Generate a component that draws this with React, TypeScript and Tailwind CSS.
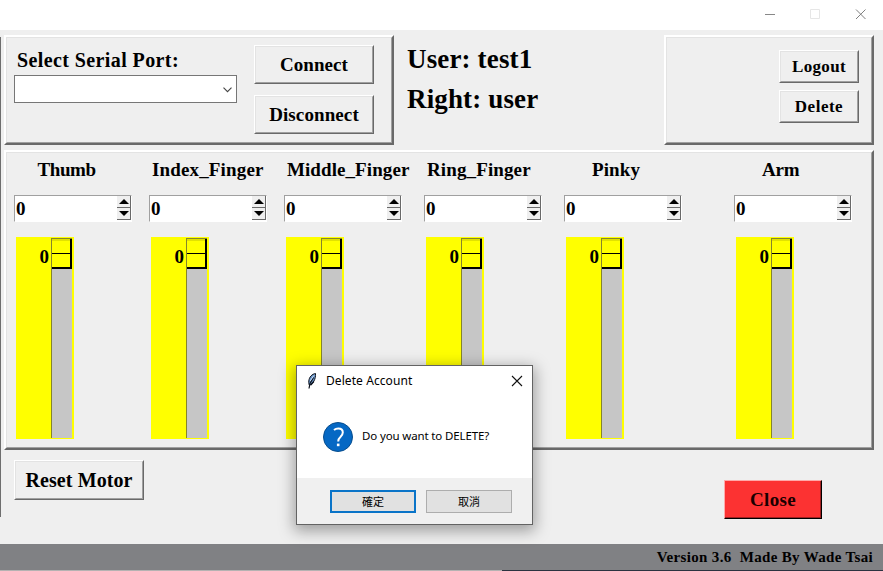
import React from "react";

const serif = "font-['Liberation_Serif',serif] font-bold text-black whitespace-nowrap leading-none";
const dialogFont = "font-['Noto_Sans','Noto_Sans_CJK_TC',sans-serif] text-black whitespace-nowrap leading-none";

function Raised({ className, children }: { className: string; children?: React.ReactNode }) {
  return (
    <div className={`shrink-0 border-2 border-t-white border-l-white border-r-[#696969] border-b-[#696969] ${className}`}>
      <div className="h-full w-full border border-t-[#e3e3e3] border-l-[#e3e3e3] border-r-[#a0a0a0] border-b-[#a0a0a0]">
        {children}
      </div>
    </div>
  );
}

function Button({ className, children }: { className: string; children: React.ReactNode }) {
  return (
    <button className={`block shrink-0 border border-t-white border-l-white border-r-[#696969] border-b-[#696969] ${serif} ${className}`}>
      <span className="flex h-full w-full items-center justify-center border border-t-[#e3e3e3] border-l-[#e3e3e3] border-r-[#a0a0a0] border-b-[#a0a0a0] pb-px">
        {children}
      </span>
    </button>
  );
}

function SpinArrow({ down }: { down?: boolean }) {
  return (
    <div className="flex h-[12px] w-[14px] items-center justify-center border-r border-b border-r-[#696969] border-b-[#696969] bg-[#efefef] pl-px">
      <svg width="10" height="5" viewBox="0 0 10 5">
        <path d={down ? "M0 0h10L5 5z" : "M0 5h10L5 0z"} fill="#000" />
      </svg>
    </div>
  );
}

function Motor({ name, width, label }: { name: string; width: string; label: string }) {
  return (
    <div className={`shrink-0 ${width}`}>
      <div className={`h-[36px] pt-[1px] text-[19px] ${serif} ${label}`}>{name}</div>
      <div className="flex h-[27px] w-[118px] justify-between border border-t-[#a0a0a0] border-l-[#a0a0a0] border-r-white border-b-white bg-white">
        <span className={`pt-[3px] pl-[1px] text-[19px] ${serif}`}>0</span>
        <div className="h-[24px]">
          <SpinArrow />
          <SpinArrow down />
        </div>
      </div>
      <div className="mt-[15px] ml-[2px] flex h-[202px] w-[58px] bg-[#ffff00] pt-px">
        <span className={`w-[35px] pt-[9px] pr-[2px] text-right text-[19px] ${serif}`}>0</span>
        <div className="h-[200px] w-[21px] border-t border-l border-[#85852c] bg-[#c6c6c6]">
          <div className="h-[30px] w-[20px] border-r-2 border-b-2 border-black bg-[#ffff00]">
            <div className="h-[15px] border-t-2 border-b border-t-[#e2e200] border-b-black" />
          </div>
        </div>
      </div>
    </div>
  );
}

export default function App() {
  return (
    <div className="flex h-[571px] w-[883px] flex-col overflow-hidden bg-[#efefef]">
      <div className="flex h-[30px] shrink-0 justify-end bg-white">
        <svg width="118" height="30" viewBox="765 0 118 30" fill="none">
          <path d="M765 14.5h10" stroke="#888" />
          <path d="M810.500 9.500h9v9h-9z" stroke="#e6e6e6" />
          <path d="M856 9.500l9.500 9.500M865.500 9.500l-9.500 9.500" stroke="#808080" />
        </svg>
      </div>

      <div className="flex h-[514px] shrink-0">
        <div className="mt-[7px] h-[480px] w-px shrink-0 bg-[#6e6e6e]" />
        <div className="ml-[3px] flex flex-col pt-[5px]">
          <div className="flex h-[110px]">
            <Raised className="h-[110px] w-[390px]">
              <div className="flex">
                <div className="w-[240px] pt-[12px] pl-[7px]">
                  <div className={`h-[25px] pl-[3px] text-[20px] tracking-[0.4px] ${serif}`}>Select Serial Port:</div>
                  <div className="flex h-[28px] w-[223px] items-center justify-end border border-[#767676] bg-white pr-[4px]">
                    <svg className="mt-px" width="9" height="6" viewBox="0 0 9 6" fill="none" stroke="#444" strokeWidth="1.100">
                      <path d="M0.500 0.700l4 4 4-4" />
                    </svg>
                  </div>
                </div>
                <div className="flex flex-col gap-[11px] pt-[7px] pl-[7px]">
                  <Button className="h-[39px] w-[120px] text-[19px] tracking-[0.05px]">Connect</Button>
                  <Button className="h-[39px] w-[120px] text-[19px] tracking-[0.1px]">Disconnect</Button>
                </div>
              </div>
            </Raised>
            <div className={`w-[270px] pt-[11px] pl-[13px] text-[27px] tracking-[0.15px] ${serif}`}>
              <div className="h-[40px]">User: test1</div>
              <div>Right: user</div>
            </div>
            <Raised className="h-[110px] w-[210px]">
              <div className="flex flex-col items-end gap-[7px] pt-[12px] pr-[12px]">
                <Button className="h-[33px] w-[80px] text-[17px] tracking-[0.3px]">Logout</Button>
                <Button className="h-[33px] w-[80px] text-[17px] tracking-[0.5px]">Delete</Button>
              </div>
            </Raised>
          </div>

          <Raised className="mt-[5px] h-[300px] w-[870px]">
            <div className="flex pt-[6px] pl-[7px]">
              <Motor name="Thumb" width="w-[135px]" label="pl-[23.5px] tracking-[-0.4px]" />
              <Motor name="Index_Finger" width="w-[135px]" label="pl-[3px] tracking-[0.15px]" />
              <Motor name="Middle_Finger" width="w-[140px]" label="pl-[3px] tracking-[0.08px]" />
              <Motor name="Ring_Finger" width="w-[140px]" label="pl-[3px] tracking-[0.12px]" />
              <Motor name="Pinky" width="w-[170px]" label="pl-[28px] tracking-[0.1px]" />
              <Motor name="Arm" width="w-[118px]" label="pl-[28px] tracking-[-0.2px]" />
            </div>
          </Raised>

          <div className="flex items-start justify-between pt-[10px] pr-[52px] pl-[10px]">
            <Button className="h-[40px] w-[130px] text-[20px] tracking-[0.1px]">Reset Motor</Button>
            <button className={`mt-[20px] block h-[39px] w-[98px] border border-t-[#ffaaaa] border-l-[#ffaaaa] border-r-black border-b-black bg-[#fc3232] ${serif}`}>
              <span className="flex h-full items-center justify-center border-r border-b border-[#a02020] pl-px text-[19px] tracking-[0.3px] text-[#190000]">Close</span>
            </button>
          </div>
        </div>
      </div>

      <div className={`flex h-[26px] shrink-0 items-center justify-end bg-[#808184] pr-[10px] text-[15px] tracking-[0.330px] ${serif}`}>
        <span className="whitespace-pre">Version 3.6  Made By Wade Tsai</span>
      </div>
      <div className="flex h-px shrink-0">
        <div className="w-[502px] bg-[#b5b2b2]" />
        <div className="flex-1 bg-[#2b3340]" />
      </div>

      <div className="absolute top-[365px] left-[296px] flex h-[160px] w-[237px] flex-col border border-[#636363] bg-white shadow-[0_4px_14px_2px_rgba(0,0,0,0.34)]">
        <div className="flex h-[29px] items-center pr-[9px] pl-[9px]">
          <svg width="12" height="18" viewBox="0 0 12 18">
            <path d="M9.500 1.500C6 2 3.200 5 2.800 9c-.2 2 .1 3.300.6 4.300C7 12 10 7 9.500 1.500z" fill="#6994c8" stroke="#10151f" strokeWidth="1" />
            <path d="M7.500 5.500L4 11.500 3 16.500M7.800 9.500l-3 3.500" fill="none" stroke="#0c111b" strokeWidth="1.200" />
            <path d="M7.800 3.500L4.200 9" stroke="#c8def5" strokeWidth="1" />
          </svg>
          <span className={`mt-px ml-[8px] text-[12px] tracking-[0.08px] ${dialogFont}`}>Delete Account</span>
          <svg className="ml-auto" width="12" height="12" viewBox="0 0 12 12" fill="none" stroke="#111" strokeWidth="1.100">
            <path d="M1 1l10 10M11 1L1 11" />
          </svg>
        </div>
        <div className="flex h-[83px] items-center pl-[26px]">
          <svg className="mt-px" width="30" height="30" viewBox="0 0 30 30">
            <circle cx="15" cy="15" r="14.500" fill="#0568c4" stroke="#084d8d" />
            <path d="M11 8C12.200 7 13.700 6.500 15.300 6.500c2.700 0 4.500 1.500 4.500 4 0 2-1.100 3.200-2.400 4.400-1.500 1.300-2.200 2.300-2.200 4.700" fill="none" stroke="#fff" strokeWidth="2" />
            <rect x="13.900" y="21.600" width="2.600" height="2.600" fill="#fff" />
          </svg>
          <span className={`mb-px ml-[9px] text-[11.500px] tracking-[-0.140px] ${dialogFont}`}>Do you want to DELETE?</span>
        </div>
        <div className="flex flex-1 items-start gap-[10px] bg-[#f0f0f0] pt-[12px] pl-[33px]">
          <button className={`h-[23px] w-[86px] border-2 border-[#0a74c8] bg-[#e1e1e1] pb-px text-[11px] ${dialogFont}`}>確定</button>
          <button className={`h-[23px] w-[86px] border border-[#adadad] bg-[#e1e1e1] pb-px text-[11px] ${dialogFont}`}>取消</button>
        </div>
      </div>
    </div>
  );
}
